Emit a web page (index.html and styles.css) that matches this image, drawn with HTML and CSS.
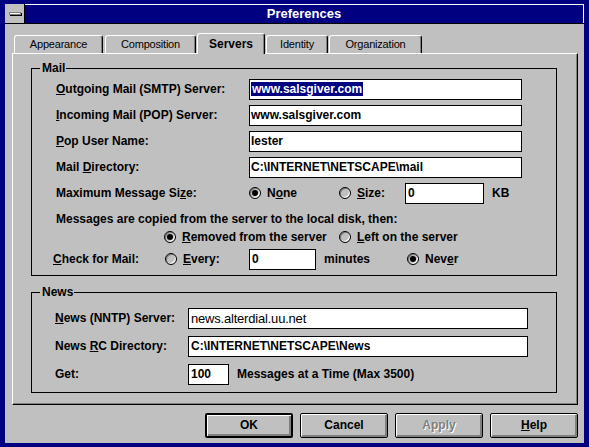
FILE: index.html
```html
<!DOCTYPE html>
<html lang="en">
<head>
  <meta charset="UTF-8">
  <title>Preferences</title>
  <link rel="stylesheet" href="styles.css">
</head>
<body>
  <div class="window">
    <div class="titlebar">
      <div class="sysmenu"><span class="sysbar"></span></div>
      <div class="title">Preferences</div>
    </div>
    <div class="dialog">
      <div class="tabs">
        <div class="tab tab-appearance">Appearance</div>
        <div class="tab tab-composition">Composition</div>
        <div class="tab tab-servers active">Servers</div>
        <div class="tab tab-identity">Identity</div>
        <div class="tab tab-organization">Organization</div>
      </div>
      <div class="panel">
        <fieldset class="group mail">
          <legend>Mail</legend>
          <div class="group-body">
            <div class="row">
              <span class="lbl"><u>O</u>utgoing Mail (SMTP) Server:</span>
              <span class="field wide"><span class="selected">www.salsgiver.com</span></span>
            </div>
            <div class="row">
              <span class="lbl"><u>I</u>ncoming Mail (POP) Server:</span>
              <span class="field wide">www.salsgiver.com</span>
            </div>
            <div class="row">
              <span class="lbl"><u>P</u>op User Name:</span>
              <span class="field wide">lester</span>
            </div>
            <div class="row">
              <span class="lbl">Mail <u>D</u>irectory:</span>
              <span class="field wide">C:\INTERNET\NETSCAPE\mail</span>
            </div>
            <div class="row">
              <span class="lbl">Maximum Message Si<u>z</u>e:</span>
              <span class="opt opt-none"><span class="radio on"></span><span>N<u>o</u>ne</span></span>
              <span class="opt opt-size"><span class="radio"></span><span><u>S</u>ize:</span></span>
              <span class="field size">0</span>
              <span class="unit">KB</span>
            </div>
            <div class="note">Messages are copied from the server to the local disk, then:</div>
            <div class="row row-short">
              <span class="opt opt-removed"><span class="radio on"></span><span><u>R</u>emoved from the server</span></span>
              <span class="opt"><span class="radio"></span><span><u>L</u>eft on the server</span></span>
            </div>
            <div class="row row-check">
              <span class="lbl lbl-check"><u>C</u>heck for Mail:</span>
              <span class="opt opt-every"><span class="radio"></span><span><u>E</u>very:</span></span>
              <span class="field minutes">0</span>
              <span class="unit unit-minutes">minutes</span>
              <span class="opt"><span class="radio on"></span><span>Nev<u>e</u>r</span></span>
            </div>
          </div>
        </fieldset>

        <fieldset class="group news">
          <legend>News</legend>
          <div class="group-body">
            <div class="row">
              <span class="lbl"><u>N</u>ews (NNTP) Server:</span>
              <span class="field news-wide plain">news.alterdial.uu.net</span>
            </div>
            <div class="row">
              <span class="lbl">News <u>R</u>C Directory:</span>
              <span class="field news-wide">C:\INTERNET\NETSCAPE\News</span>
            </div>
            <div class="row">
              <span class="lbl">Get:</span>
              <span class="field count">100</span>
              <span class="unit">Messages at a Time (Max 3500)</span>
            </div>
          </div>
        </fieldset>
      </div>
      <div class="buttons">
        <div class="btn default">OK</div>
        <div class="btn">Cancel</div>
        <div class="btn disabled">Apply</div>
        <div class="btn"><u>H</u>elp</div>
      </div>
    </div>
  </div>
</body>
</html>
```

FILE: styles.css
```css
* {
  margin: 0;
  padding: 0;
}
body {
  background: #000080;
  font-family: "Liberation Sans", Arial, sans-serif;
  font-size: 12px;
  font-weight: bold;
  color: #000;
}
u {
  text-decoration: underline;
}

.window {
  width: 589px;
  height: 447px;
  box-sizing: border-box;
  padding: 4px 5px;
  background: #000080;
  display: flex;
  flex-direction: column;
}

/* title bar */
.titlebar {
  height: 20px;
  display: flex;
  border-bottom: 1px solid #000;
  box-sizing: border-box;
}
.sysmenu {
  width: 20px;
  box-sizing: border-box;
  border-right: 1px solid #000;
  background: #c0c0c0;
  display: flex;
  align-items: center;
  justify-content: center;
}
.sysbar {
  display: block;
  width: 10px;
  height: 1px;
  background: #fff;
  border: 1px solid #808080;
  box-shadow: 1px 1px 0 #000;
}
.title {
  flex: 1;
  background: #000080;
  border-top: 1px solid #fff;
  border-right: 1px solid #fff;
  color: #fff;
  font-size: 13px;
  line-height: 18px;
  text-align: center;
}

/* dialog body */
.dialog {
  flex: 1;
  background: #c0c0c0;
  padding: 9px 5px 0 7px;
  display: flex;
  flex-direction: column;
}

.tabs {
  height: 20px;
  display: flex;
  align-items: flex-end;
  padding-left: 2px;
}
.tab {
  height: 18px;
  box-sizing: border-box;
  border-top: 1px solid #fff;
  border-left: 1px solid #fff;
  border-right: 1px solid #000;
  border-radius: 3px 3px 0 0;
  box-shadow: inset -1px 0 0 #808080;
  font-size: 11px;
  font-weight: normal;
  letter-spacing: -0.2px;
  line-height: 16px;
  text-align: center;
  background: #c0c0c0;
}
.tab-appearance { width: 89px; }
.tab-composition { width: 91px; margin-left: 2px; }
.tab-servers { width: 68px; margin-left: 1px; }
.tab-identity { width: 62px; margin-left: 1px; }
.tab-organization { width: 93px; margin-left: 1px; }
.tab.active {
  height: 21px;
  margin-bottom: -1px;
  padding-top: 2px;
  font-size: 12px;
  font-weight: bold;
  letter-spacing: 0;
  position: relative;
  z-index: 1;
}

.panel {
  width: 566px;
  height: 352px;
  box-sizing: border-box;
  border-top: 1px solid #fff;
  border-left: 1px solid #fff;
  border-right: 1px solid #000;
  border-bottom: 1px solid #000;
  box-shadow: inset -1px -1px 0 #808080;
  padding-top: 7px;
}

/* group boxes */
.group {
  width: 526px;
  margin-left: 18px;
  box-sizing: border-box;
  border: 1px solid #000;
  min-width: 0;
}
.group legend {
  margin-left: 8px;
  padding: 0 1px 0 2px;
  line-height: 14px;
}
.mail .group-body {
  padding: 1px 0 5px 24px;
}
.news {
  margin-top: 9px;
}
.news .group-body {
  padding: 5px 0 4px 23px;
}

.row {
  display: flex;
  align-items: center;
  height: 26px;
}
.news .row {
  height: 28px;
}
.mail .lbl { width: 193px; }
.news .lbl { width: 133px; }

.field {
  height: 21px;
  box-sizing: border-box;
  border: 1px solid #000;
  background: #fff;
  padding-left: 2px;
  line-height: 19px;
  white-space: nowrap;
  overflow: hidden;
}
.field.wide { width: 273px; padding-left: 1px; }
.field.size { width: 79px; }
.field.minutes { width: 67px; }
.field.news-wide { width: 340px; }
.field.count { width: 41px; }
.field.plain {
  font-weight: normal;
  font-size: 13px;
  letter-spacing: -0.2px;
}
.selected {
  background: #000080;
  color: #fff;
  padding: 0 1px;
}

.unit { margin-left: 8px; }
.unit-minutes { width: 83px; }

.opt {
  display: flex;
  align-items: center;
  gap: 6px;
}
.opt-none { width: 90px; }
.opt-size { width: 66px; }
.opt-removed { width: 175px; margin-left: 108px; }
.opt-every { width: 84px; }

.radio {
  width: 12px;
  height: 12px;
  box-sizing: border-box;
  border: 1px solid #000;
  border-radius: 50%;
  background: #c0c0c0;
  box-shadow: inset 1px 1px 0 #808080, inset -1px -1px 0 #fff;
  display: flex;
  align-items: center;
  justify-content: center;
  flex: none;
}
.radio.on::after {
  content: "";
  width: 6px;
  height: 6px;
  border-radius: 50%;
  background: #000;
}

.note {
  height: 16px;
  line-height: 16px;
  margin-top: 5px;
}
.row-short {
  height: 17px;
  margin-top: 1px;
}
.row-check {
  height: 22px;
  margin-top: 3px;
}
.mail .lbl-check {
  width: 112px;
  margin-left: -3px;
}

/* buttons */
.buttons {
  display: flex;
  justify-content: flex-end;
  gap: 7px;
  margin-top: 8px;
  padding-right: 1px;
}
.btn {
  width: 88px;
  height: 25px;
  box-sizing: border-box;
  border: 1px solid #000;
  border-radius: 2px;
  background: #c0c0c0;
  box-shadow: inset 1px 1px 0 #fff, inset -2px -2px 0 #808080;
  text-align: center;
  line-height: 22px;
}
.btn.default {
  border-width: 2px;
  line-height: 20px;
}
.btn.disabled {
  color: #808080;
  text-shadow: 1px 1px 0 #fff;
}
```
